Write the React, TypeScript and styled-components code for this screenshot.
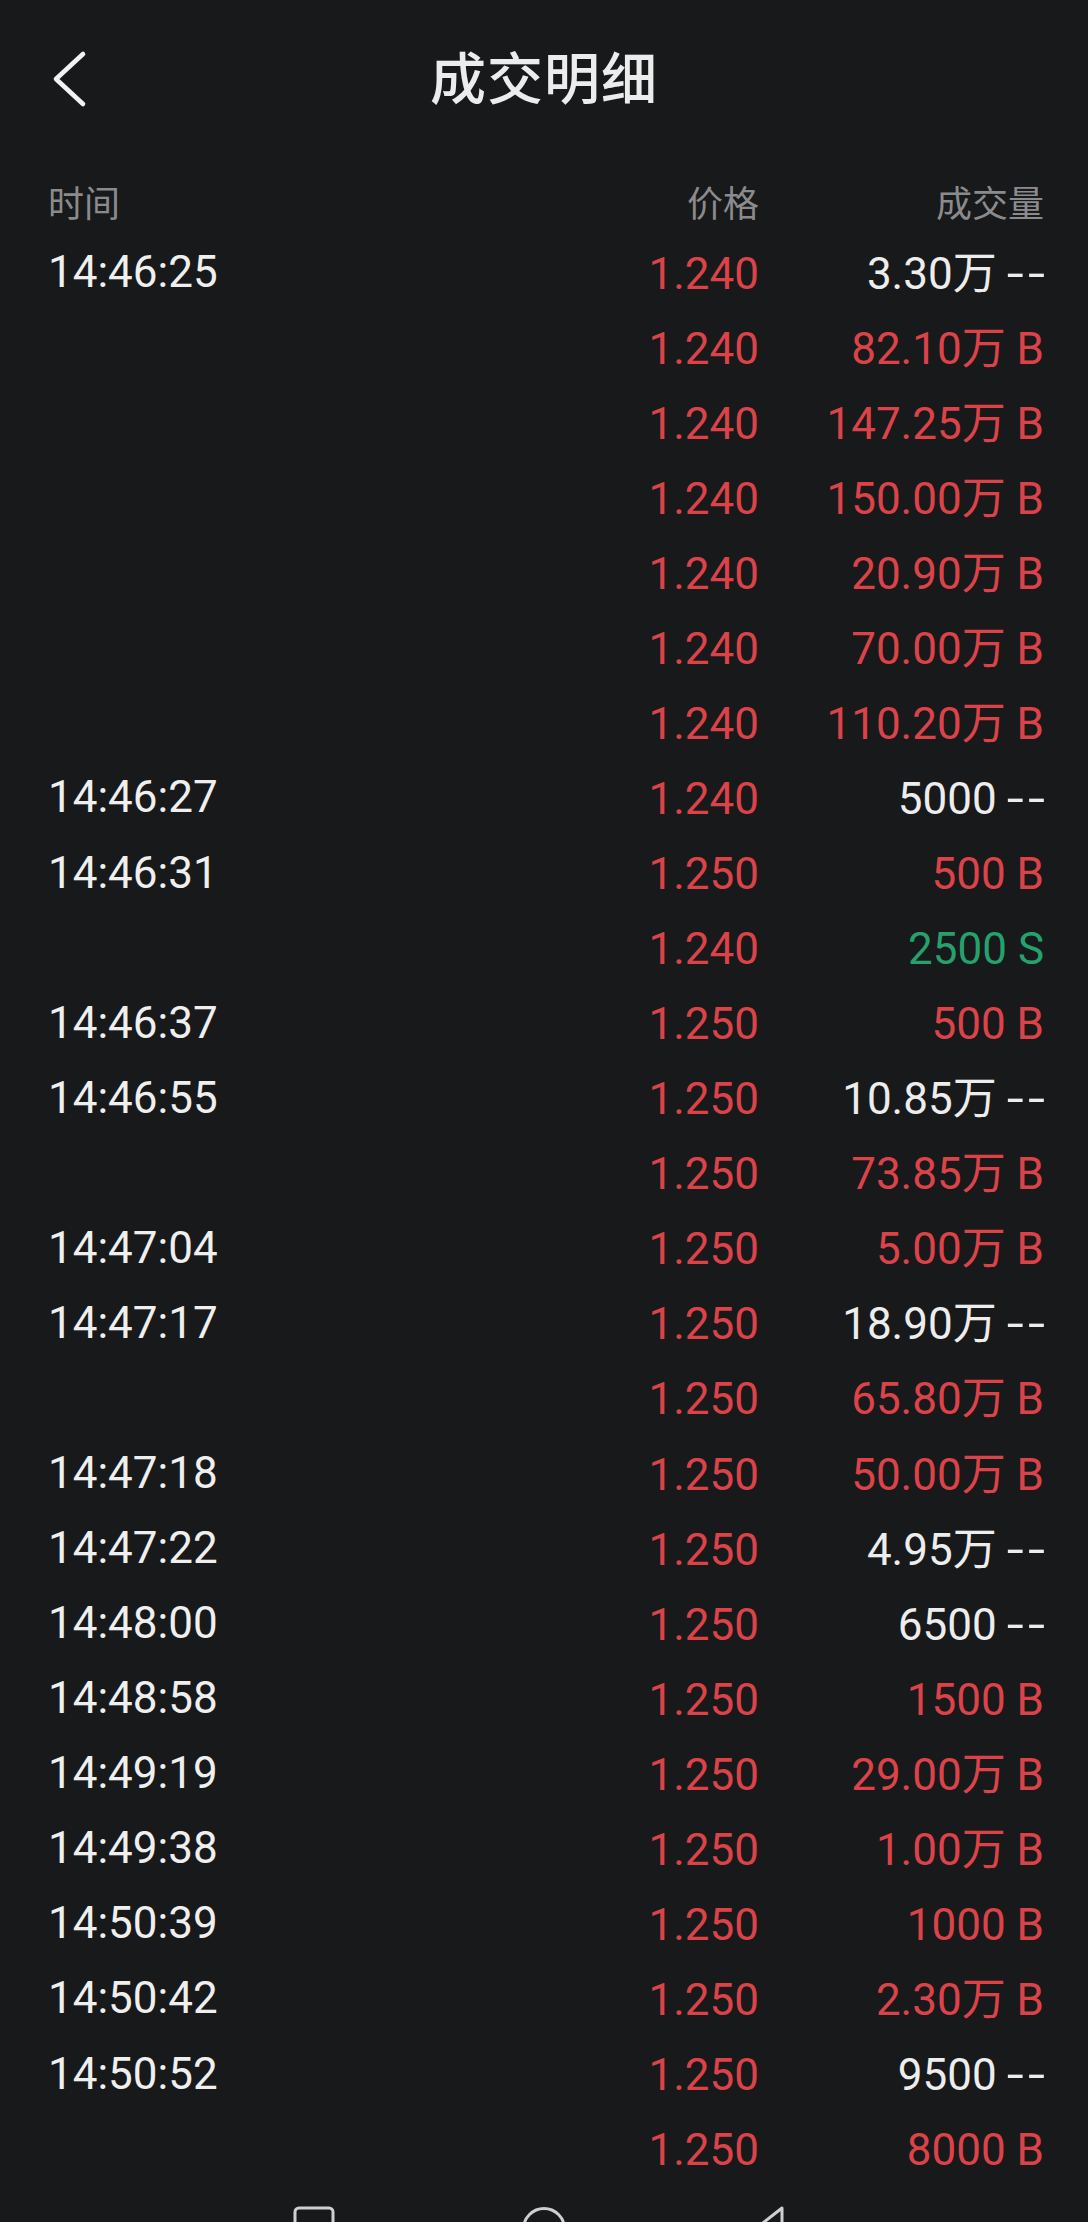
import React from 'react'
import styled, { createGlobalStyle } from 'styled-components'

type Side = 'B' | 'S' | '--'

interface Trade {
  time: string
  price: string
  volume: string
  side: Side
}

const trades: Trade[] = [
  { time: '14:46:25', price: '1.240', volume: '3.30万', side: '--' },
  { time: '', price: '1.240', volume: '82.10万', side: 'B' },
  { time: '', price: '1.240', volume: '147.25万', side: 'B' },
  { time: '', price: '1.240', volume: '150.00万', side: 'B' },
  { time: '', price: '1.240', volume: '20.90万', side: 'B' },
  { time: '', price: '1.240', volume: '70.00万', side: 'B' },
  { time: '', price: '1.240', volume: '110.20万', side: 'B' },
  { time: '14:46:27', price: '1.240', volume: '5000', side: '--' },
  { time: '14:46:31', price: '1.250', volume: '500', side: 'B' },
  { time: '', price: '1.240', volume: '2500', side: 'S' },
  { time: '14:46:37', price: '1.250', volume: '500', side: 'B' },
  { time: '14:46:55', price: '1.250', volume: '10.85万', side: '--' },
  { time: '', price: '1.250', volume: '73.85万', side: 'B' },
  { time: '14:47:04', price: '1.250', volume: '5.00万', side: 'B' },
  { time: '14:47:17', price: '1.250', volume: '18.90万', side: '--' },
  { time: '', price: '1.250', volume: '65.80万', side: 'B' },
  { time: '14:47:18', price: '1.250', volume: '50.00万', side: 'B' },
  { time: '14:47:22', price: '1.250', volume: '4.95万', side: '--' },
  { time: '14:48:00', price: '1.250', volume: '6500', side: '--' },
  { time: '14:48:58', price: '1.250', volume: '1500', side: 'B' },
  { time: '14:49:19', price: '1.250', volume: '29.00万', side: 'B' },
  { time: '14:49:38', price: '1.250', volume: '1.00万', side: 'B' },
  { time: '14:50:39', price: '1.250', volume: '1000', side: 'B' },
  { time: '14:50:42', price: '1.250', volume: '2.30万', side: 'B' },
  { time: '14:50:52', price: '1.250', volume: '9500', side: '--' },
  { time: '', price: '1.250', volume: '8000', side: 'B' },
]

const sideColor: Record<Side, string> = {
  B: '#dc4349',
  S: '#26a06c',
  '--': '#ededed',
}

const GlobalStyle = createGlobalStyle`
  html, body {
    margin: 0;
    padding: 0;
    background: #18191b;
  }
  body {
    font-family: Roboto, "Noto Sans CJK SC", sans-serif;
  }
`

const App: React.FC = () => {
  return (
    <Page>
      <GlobalStyle />
      <TopBar>
        <BackButton aria-label="back">
          <svg width="44" height="62" viewBox="0 0 44 62" fill="none">
            <path d="M36 6 L9 31 L36 56" stroke="#f2f2f2" strokeWidth="4.6" strokeLinecap="round" strokeLinejoin="round" />
          </svg>
        </BackButton>
        <Title>成交明细</Title>
        <span />
      </TopBar>

      <HeaderRow>
        <HeadCell>时间</HeadCell>
        <HeadCell align="right">价格</HeadCell>
        <HeadCell align="right">成交量</HeadCell>
      </HeaderRow>

      <List>
        {trades.map((t, i) => (
          <Row key={i}>
            <TimeCell>{t.time}</TimeCell>
            <PriceCell>{t.price}</PriceCell>
            <VolumeCell color={sideColor[t.side]}>
              {t.side === '--' ? (
                <>
                  {t.volume}
                  <Dashes>--</Dashes>
                </>
              ) : (
                `${t.volume} ${t.side}`
              )}
            </VolumeCell>
          </Row>
        ))}
      </List>

      <NavBar>
        <NavIcon>
          <svg width="44" height="44" viewBox="0 0 44 44" fill="none">
            <rect x="3" y="2" width="38" height="38" rx="4" stroke="#cfcfcf" strokeWidth="3" />
          </svg>
        </NavIcon>
        <NavIcon>
          <svg width="46" height="46" viewBox="0 0 46 46" fill="none">
            <circle cx="23" cy="23" r="20.5" stroke="#cfcfcf" strokeWidth="3" />
          </svg>
        </NavIcon>
        <NavIcon>
          <svg width="44" height="50" viewBox="0 0 44 50" fill="none">
            <path d="M30 2 L2 24 L30 46 Z" stroke="#cfcfcf" strokeWidth="3" strokeLinejoin="round" />
          </svg>
        </NavIcon>
      </NavBar>
    </Page>
  )
}

const Page = styled.div`
  width: 1088px;
  height: 2222px;
  overflow: hidden;
  background: #18191b;
  color: #ededed;
`

// top bar
const TopBar = styled.div`
  height: 156px;
  display: grid;
  grid-template-columns: 1fr auto 1fr;
  align-items: center;
`

const BackButton = styled.div`
  display: flex;
  align-items: center;
  padding-left: 47px;
  padding-top: 1px;
`

const Title = styled.h1`
  margin: 0 0 6px;
  font-family: "Noto Sans CJK SC", sans-serif;
  font-size: 56px;
  font-weight: 500;
  color: #ececec;
  letter-spacing: 1px;
  line-height: 1;
`

// table
const columns = `
  display: grid;
  grid-template-columns: 1fr 260px 285px;
  padding: 0 44px 0 48px;
  align-items: center;
`

const HeaderRow = styled.div`
  ${columns}
  height: 77px;
  padding-top: 12px;
  box-sizing: border-box;
`

const HeadCell = styled.div<{ align?: 'left' | 'right' }>`
  font-family: "Noto Sans CJK SC", sans-serif;
  font-size: 36px;
  line-height: 42px;
  color: #8b8b8d;
  text-align: ${(p) => p.align || 'left'};
`

const List = styled.div`
  display: flex;
  flex-direction: column;
  padding-top: 3px;
`

const Row = styled.div`
  ${columns}
  height: 75.07px;
  font-size: 44px;
  line-height: 52px;
`

const TimeCell = styled.div`
  color: #efefef;
  margin-top: -3px;
`

const PriceCell = styled.div`
  color: #dc4349;
  text-align: right;
`

const VolumeCell = styled.div<{ color: string }>`
  color: ${(p) => p.color};
  text-align: right;
  white-space: nowrap;
`

// the "--" marker is drawn wider than a plain hyphen pair
const Dashes = styled.span`
  display: inline-block;
  margin-left: 22px;
  margin-right: -5px;
  letter-spacing: 3px;
  transform: scaleX(1.4);
  transform-origin: right center;
`

// system nav bar
const NavBar = styled.div`
  display: flex;
  justify-content: center;
  gap: 170px;
  padding-top: 18px;
`

const NavIcon = styled.div`
  width: 60px;
  display: flex;
  justify-content: center;
`

export default App
